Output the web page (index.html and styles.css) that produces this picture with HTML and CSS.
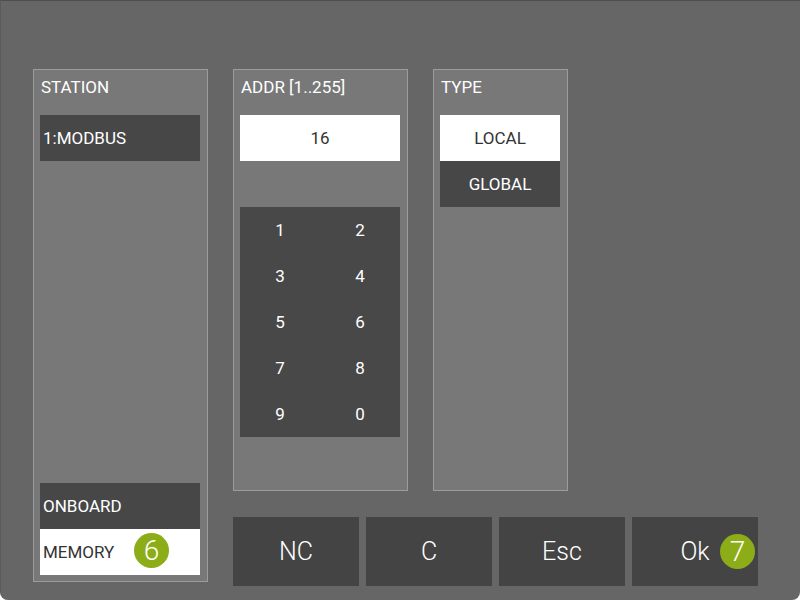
FILE: index.html
```html
<!DOCTYPE html>
<html lang="en">
<head>
  <meta charset="UTF-8" />
  <title>Station Address</title>
  <link rel="stylesheet" href="styles.css">
</head>
<body>
  <div class="screen">
    <div class="main">
      <div class="panel station">
        <div class="panel-title">STATION</div>
        <div class="item dark left">1:MODBUS</div>
        <div class="spacer"></div>
        <div class="item dark left">ONBOARD</div>
        <div class="item light left marked">MEMORY<span class="badge badge-6">6</span></div>
      </div>

      <div class="right">
        <div class="top-row">
          <div class="panel addr">
            <div class="panel-title">ADDR [1..255]</div>
            <div class="item light">16</div>
            <div class="keypad">
              <button>1</button><button>2</button>
              <button>3</button><button>4</button>
              <button>5</button><button>6</button>
              <button>7</button><button>8</button>
              <button>9</button><button>0</button>
            </div>
          </div>

          <div class="panel type">
            <div class="panel-title">TYPE</div>
            <div class="item light">LOCAL</div>
            <div class="item dark">GLOBAL</div>
          </div>
        </div>

        <div class="actions">
          <button>NC</button>
          <button>C</button>
          <button>Esc</button>
          <button class="marked">Ok<span class="badge badge-7">7</span></button>
        </div>
      </div>
    </div>
  </div>
</body>
</html>
```

FILE: styles.css
```css
* {
  box-sizing: border-box;
  font-family: Roboto, 'Liberation Sans', sans-serif;
}

body {
  margin: 0;
  background: #fff;
}

.screen {
  width: 800px;
  height: 600px;
  background: #666;
  border-top: 1px solid #4e4e4e;
  border-left: 1px solid #5a5a5a;
  border-radius: 0 0 8px 8px;
  padding: 68px 0 0 32px;
}

.main {
  display: flex;
  align-items: flex-start;
  gap: 25px;
}

.panel {
  background: #787878;
  border: 1px solid #9c9c9c;
  padding: 0 7px 6px 6px;
  display: flex;
  flex-direction: column;
}

.panel-title {
  height: 45px;
  line-height: 34px;
  padding-left: 1px;
  color: #fff;
  font-size: 17px;
}

.station {
  width: 175px;
  height: 513px;
}

.spacer {
  flex: 1;
}

.item {
  height: 46px;
  line-height: 46px;
  font-size: 17px;
  text-align: center;
}

.item.left {
  text-align: left;
  padding-left: 3px;
}

.dark {
  background: #474747;
  color: #fff;
}

.light {
  background: #fff;
  color: #333;
}

.right {
  width: 525px;
}

.top-row {
  display: flex;
  gap: 25px;
  height: 422px;
}

.addr {
  width: 175px;
}

.type {
  width: 135px;
}

.keypad {
  margin-top: 46px;
  background: #484848;
  display: grid;
  grid-template-columns: 1fr 1fr;
  grid-auto-rows: 46px;
}

.keypad button {
  background: none;
  border: none;
  color: #fff;
  font-size: 17px;
  padding: 0;
}

.actions {
  margin-top: 26px;
  display: flex;
  gap: 7px;
}

.actions button {
  width: 126px;
  height: 69px;
  background: #444;
  border: none;
  color: #fff;
  font-size: 25px;
  font-weight: 300;
  padding: 0;
}

.marked {
  position: relative;
}

.badge {
  position: absolute;
  width: 35px;
  height: 35px;
  border-radius: 50%;
  background: #8cad17;
  color: #fff;
  font-size: 28px;
  font-weight: 300;
  line-height: 35px;
  text-align: center;
}

.badge-6 {
  left: 94px;
  top: 4px;
}

.badge-7 {
  right: 3px;
  top: 17px;
}
```
